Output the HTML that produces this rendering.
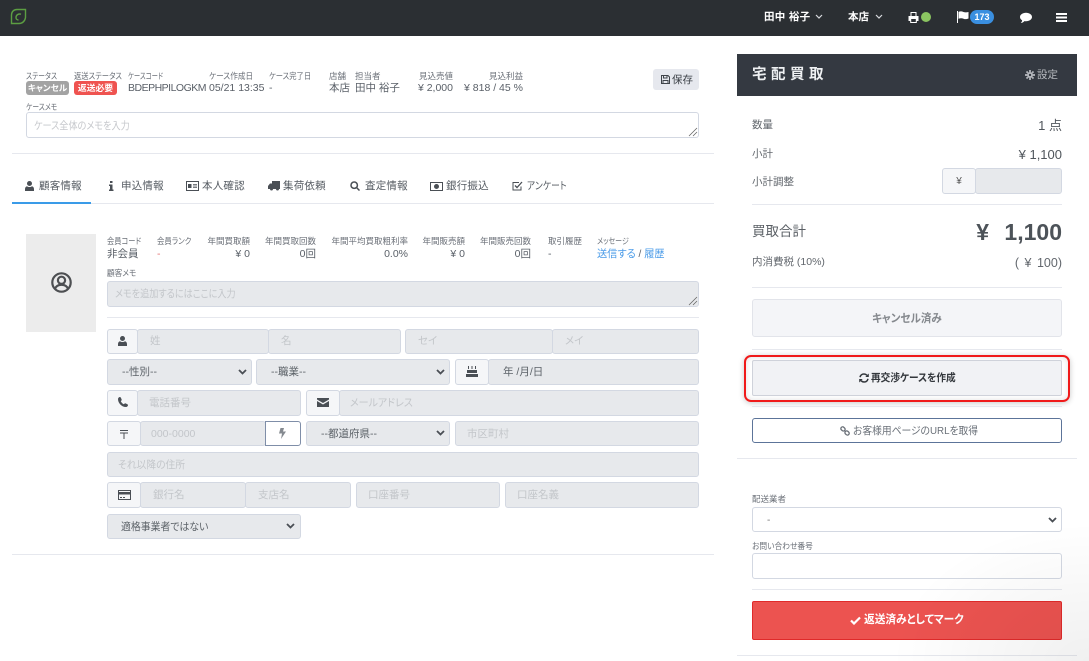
<!DOCTYPE html>
<html lang="ja"><head><meta charset="utf-8"><title>宅配買取</title>
<style>
html,body{margin:0;padding:0;background:#fff}
body{position:relative;width:1089px;height:661px;overflow:hidden;font-family:"Liberation Sans","Noto Sans CJK JP",sans-serif;color:#4a5057;font-feature-settings:"palt"}
div,svg{position:absolute;box-sizing:border-box}
.t{white-space:nowrap;height:16px;line-height:16px;font-size:11px;transform-origin:left center}
.r{text-align:right}
.l{font-size:8.5px;color:#6b7078}
.v{font-size:10.5px;color:#5a6068}
.i{background:#e7e9ec;border:1px solid #d3d8e2;border-radius:3px;font-size:10.5px;color:#c3c6ca;line-height:23px;white-space:nowrap}
.i span,.s span,.m span{display:inline-block;transform:scaleX(.87);transform-origin:left center}
.a{background:#f5f6f8;border:1px solid #d3d8e2;border-radius:3px}
.s{background:#e7e9ec;border:1px solid #d3d8e2;border-radius:3px;font-size:10.5px;color:#5c6268;line-height:24px;white-space:nowrap}
.h{height:1px;background:#e6e8ee}
.tab{font-size:10.5px;color:#555b62;letter-spacing:.2px}
</style></head><body>

<!-- navbar -->
<div style="left:0;top:0;width:1089px;height:36px;background:#2b2f33"></div>
<svg style="left:10px;top:8px" width="17" height="17" viewBox="0 0 17 17" fill="none" stroke="#5c9e42" stroke-width="1.4"><path d="M15.500 1.500H7C3.500 1.500 1.500 4 1.500 7v8.500H9c3.500 0 6-2.500 6.500-6z"/><path d="M11 6.200C8.500 5.500 6 7 6 9.500c0 1.500 1 2.500 2.500 2.500"/></svg>
<div class="t" style="left:764px;top:9px;font-size:10.5px;font-weight:bold;color:#fff;letter-spacing:.3px">田中 裕子</div>
<svg style="left:815px;top:14px" width="8" height="6" viewBox="0 0 8 6" fill="none" stroke="#d8dade" stroke-width="1.200"><path d="M1 1l3 3 3-3"/></svg>
<div class="t" style="left:848px;top:9px;font-size:10.5px;font-weight:bold;color:#fff">本店</div>
<svg style="left:875px;top:14px" width="8" height="6" viewBox="0 0 8 6" fill="none" stroke="#d8dade" stroke-width="1.200"><path d="M1 1l3 3 3-3"/></svg>
<svg style="left:908px;top:12px" width="11" height="11" viewBox="0 0 11 11"><path fill="#fff" fill-rule="evenodd" d="M2.500 0h6v4h2v5H8.800v2H2.200V9H.5V4h2zM3.500 1v3h4V1zM3.200 7v3h4.600V7z"/></svg>
<div style="left:921px;top:12px;width:10px;height:10px;border-radius:50%;background:#8bc561"></div>
<svg style="left:957px;top:11px" width="12" height="12" viewBox="0 0 12 12"><path fill="#fff" d="M0 0h1v12H0zM1.500 1c2-1 3.500-.5 5 0s3 .5 5 0v6.500c-2 .8-3.500.8-5 .2s-3-.7-5 0z"/></svg>
<div style="left:970px;top:10px;width:24px;height:14px;border-radius:7px;background:#3a8fe0;color:#fff;font-size:9px;font-weight:bold;text-align:center;line-height:15px">173</div>
<svg style="left:1020px;top:12px" width="12" height="12" viewBox="0 0 12 12"><path fill="#fff" d="M6 .8c3.300 0 6 1.800 6 4.200S9.300 9.200 6 9.200c-.6 0-1.100 0-1.600-.1C3.500 10.200 2 11 .8 11c.8-.8 1.300-1.700 1.300-2.800C.8 7.500 0 6.300 0 5 0 2.600 2.700.8 6 .8z"/></svg>
<svg style="left:1056px;top:13px" width="11" height="9" viewBox="0 0 11 9"><path fill="#fff" d="M0 0h11v2H0zM0 3.500h11v2H0zM0 7h11v2H0z"/></svg>

<!-- case header -->
<div class="t l" style="left:26px;top:68px;transform:scaleX(.8)">ステータス</div>
<div class="t l" style="left:74px;top:68px;transform:scaleX(.86)">返送ステータス</div>
<div class="t l" style="left:128px;top:68px;transform:scaleX(.75)">ケースコード</div>
<div class="t l" style="left:209px;top:68px;transform:scaleX(.9)">ケース作成日</div>
<div class="t l" style="left:269px;top:68px;transform:scaleX(.86)">ケース完了日</div>
<div class="t l" style="left:329px;top:68px">店舗</div>
<div class="t l" style="left:355px;top:68px">担当者</div>
<div class="t l r" style="left:393px;width:60px;top:68px">見込売値</div>
<div class="t l r" style="left:463px;width:60px;top:68px">見込利益</div>
<div style="left:26px;top:81px;width:43px;height:14px;border-radius:3px;background:#a3a3a3;color:#fff;font-size:8.5px;font-weight:bold;text-align:center;line-height:14px">キャンセル</div>
<div style="left:74px;top:81px;width:43px;height:14px;border-radius:3px;background:#ef5350;color:#fff;font-size:8.8px;font-weight:bold;text-align:center;line-height:14px">返送必要</div>
<div class="t v" style="left:128px;top:80px;letter-spacing:-.5px">BDEPHPILOGKM</div>
<div class="t v" style="left:209px;top:80px">05/21 13:35</div>
<div class="t v" style="left:269px;top:80px">-</div>
<div class="t v" style="left:329px;top:80px">本店</div>
<div class="t v" style="left:355px;top:80px">田中 裕子</div>
<div class="t v r" style="left:393px;width:60px;top:80px">¥ 2,000</div>
<div class="t v r" style="left:443px;width:80px;top:80px">¥ 818 / 45 %</div>
<div style="left:653px;top:69px;width:46px;height:21px;border-radius:3px;background:#e6e8ee"></div>
<svg style="left:661px;top:75px" width="9" height="9" viewBox="0 0 9 9" fill="none" stroke="#3f444a"><path d="M.5.5h6.500l1.500 1.500v6.500H.5zM2.500.5v2.500h3.500V.5M2 8.500V5.500h5v3"/></svg>
<div class="t" style="left:672px;top:72px;font-size:10.5px;color:#3a3f45">保存</div>
<div class="t l" style="left:26px;top:99px;transform:scaleX(.8)">ケースメモ</div>
<div class="m" style="left:26px;top:112px;width:673px;height:26px;border:1px solid #d3d8e2;border-radius:3px;background:#fff;color:#c6c8cc;font-size:10.5px;line-height:26px;padding-left:7px"><span>ケース全体のメモを入力</span></div>
<svg style="left:688px;top:127px" width="10" height="10" viewBox="0 0 10 10" stroke="#666" stroke-width=".8"><path d="M1 9l8-8M5 9l4-4"/></svg>
<div class="h" style="left:12px;top:153px;width:702px"></div>

<!-- tabs -->
<div class="h" style="left:12px;top:203px;width:702px;height:1px"></div>
<div style="left:12px;top:202px;width:79px;height:2px;background:#3a9be8"></div>
<svg style="left:25px;top:181px" width="9" height="10" viewBox="0 0 9 10"><path fill="#4a4f55" d="M4.500 0a2.500 2.500 0 1 1 0 5 2.500 2.500 0 0 1 0-5zM2 5.200c1.500 1 3.500 1 5 0 1.300.2 2 1.300 2 3V10H0V8.200c0-1.700.7-2.800 2-3z"/></svg>
<div class="t tab" style="left:39px;top:178px">顧客情報</div>
<svg style="left:108px;top:181px" width="6" height="10" viewBox="0 0 6 10"><path fill="#4a4f55" d="M2 0h2.500v2H2zM1 3.500h3.500V8.500H5.500V10H1V8.500h1V5H1z"/></svg>
<div class="t tab" style="left:121px;top:178px">申込情報</div>
<svg style="left:186px;top:181px" width="13" height="10" viewBox="0 0 13 10" fill="none" stroke="#4a4f55"><rect x=".5" y=".5" width="12" height="9"/><path fill="#4a4f55" stroke="none" d="M2 3h3.500v4H2z"/><path stroke-width=".8" d="M7 3.500h4M7 5h4M7 6.500h4"/></svg>
<div class="t tab" style="left:202px;top:178px">本人確認</div>
<svg style="left:268px;top:181px" width="12" height="10" viewBox="0 0 12 10"><path fill="#4a4f55" d="M4 0h8v8h-1a1.500 1.500 0 0 1-3 0H5a1.500 1.500 0 0 1-3 0H0V5l2-2.500h2z"/></svg>
<div class="t tab" style="left:283px;top:178px">集荷依頼</div>
<svg style="left:350px;top:181px" width="10" height="10" viewBox="0 0 10 10" fill="none" stroke="#4a4f55" stroke-width="1.500"><circle cx="4.200" cy="4.200" r="3.200"/><path d="M6.500 6.500L9.500 9.500"/></svg>
<div class="t tab" style="left:365px;top:178px">査定情報</div>
<svg style="left:430px;top:182px" width="13" height="9" viewBox="0 0 13 9" fill="none" stroke="#4a4f55"><rect x=".5" y=".5" width="12" height="8"/><circle cx="6.500" cy="4.500" r="2" fill="#4a4f55"/></svg>
<div class="t tab" style="left:446px;top:178px">銀行振込</div>
<svg style="left:512px;top:181px" width="11" height="10" viewBox="0 0 11 10" fill="none" stroke="#4a4f55"><path d="M9 5.500V9H1V1.500h6"/><path stroke-width="1.300" d="M3 4.500l2 2L10 1"/></svg>
<div class="t tab" style="left:527px;top:178px;transform:scaleX(.83)">アンケート</div>

<!-- customer -->
<div style="left:26px;top:234px;width:70px;height:98px;background:#ececec"></div>
<svg style="left:51px;top:272px" width="21" height="21" viewBox="0 0 21 21" fill="none"><circle cx="10.500" cy="10.500" r="9.200" stroke="#4d4f52" stroke-width="2.200"/><circle cx="10.500" cy="8.300" r="3.600" stroke="#4d4f52" stroke-width="2.200"/><path d="M4 17c1-3.300 3.500-4.200 6.500-4.200s5.500.9 6.500 4.200" stroke="#4d4f52" stroke-width="2.200"/></svg>

<div class="t l" style="left:107px;top:233px;transform:scaleX(.85)">会員コード</div>
<div class="t l" style="left:157px;top:233px;transform:scaleX(.87)">会員ランク</div>
<div class="t l r" style="left:190px;width:60px;top:233px">年間買取額</div>
<div class="t l r" style="left:256px;width:60px;top:233px">年間買取回数</div>
<div class="t l r" style="left:318px;width:90px;top:233px">年間平均買取粗利率</div>
<div class="t l r" style="left:405px;width:60px;top:233px">年間販売額</div>
<div class="t l r" style="left:471px;width:60px;top:233px">年間販売回数</div>
<div class="t l" style="left:548px;top:233px">取引履歴</div>
<div class="t l" style="left:597px;top:233px;transform:scaleX(.82)">メッセージ</div>
<div class="t v" style="left:107px;top:246px">非会員</div>
<div class="t v" style="left:157px;top:246px;color:#e57373">-</div>
<div class="t v r" style="left:190px;width:60px;top:246px">¥ 0</div>
<div class="t v r" style="left:256px;width:60px;top:246px">0回</div>
<div class="t v r" style="left:318px;width:90px;top:246px">0.0%</div>
<div class="t v r" style="left:405px;width:60px;top:246px">¥ 0</div>
<div class="t v r" style="left:471px;width:60px;top:246px">0回</div>
<div class="t v" style="left:548px;top:246px">-</div>
<div class="t v" style="left:597px;top:246px;color:#4a9be8;transform:scaleX(.97)">送信する <span style="color:#5a6068">/</span> 履歴</div>
<div class="t l" style="left:107px;top:265px;transform:scaleX(.9)">顧客メモ</div>
<div class="i" style="left:107px;top:281px;width:592px;height:26px;padding-left:7px;line-height:25px"><span>メモを追加するにはここに入力</span></div>
<svg style="left:688px;top:296px" width="10" height="10" viewBox="0 0 10 10" stroke="#666" stroke-width=".8"><path d="M1 9l8-8M5 9l4-4"/></svg>
<div class="h" style="left:107px;top:317px;width:592px"></div>

<!-- row 1 -->
<div class="a" style="left:107px;top:329px;width:31px;height:25px"></div>
<svg style="left:118px;top:336px" width="9" height="10" viewBox="0 0 9 10"><path fill="#4a4f55" d="M4.500 0a2.500 2.500 0 1 1 0 5 2.500 2.500 0 0 1 0-5zM2 5.200c1.500 1 3.500 1 5 0 1.300.2 2 1.300 2 3V10H0V8.200c0-1.700.7-2.800 2-3z"/></svg>
<div class="i" style="left:137px;top:329px;width:132px;height:25px;padding-left:12px">姓</div>
<div class="i" style="left:268px;top:329px;width:133px;height:25px;padding-left:12px">名</div>
<div class="i" style="left:405px;top:329px;width:148px;height:25px;padding-left:12px">セイ</div>
<div class="i" style="left:552px;top:329px;width:147px;height:25px;padding-left:12px">メイ</div>

<!-- row 2 -->
<div class="s" style="left:107px;top:359px;width:145px;height:26px;padding-left:14px">--性別--</div>
<svg style="left:238px;top:369px" width="9" height="6" viewBox="0 0 9 6" fill="none" stroke="#4a4f55" stroke-width="1.800"><path d="M1 1l3.500 3.500L8 1"/></svg>
<div class="s" style="left:256px;top:359px;width:194px;height:26px;padding-left:14px">--職業--</div>
<svg style="left:436px;top:369px" width="9" height="6" viewBox="0 0 9 6" fill="none" stroke="#4a4f55" stroke-width="1.800"><path d="M1 1l3.500 3.500L8 1"/></svg>
<div class="a" style="left:455px;top:359px;width:34px;height:26px"></div>
<svg style="left:466px;top:366px" width="12" height="11" viewBox="0 0 12 11"><path fill="#4a4f55" d="M2 0h1v3H2zM5.500 0h1v3h-1zM9 0h1v3H9zM1 4h10v3H1zM0 8h12v3H0z"/></svg>
<div class="s" style="left:488px;top:359px;width:211px;height:26px;padding-left:14px">年 /月/日</div>

<!-- row 3 -->
<div class="a" style="left:107px;top:390px;width:31px;height:26px"></div>
<svg style="left:118px;top:397px" width="10" height="10" viewBox="0 0 10 10"><path fill="#4a4f55" d="M2 0c.8 0 1.500 2 1.800 3L2.800 4.200c.6 1.300 1.700 2.400 3 3L7 6.200c1 .3 3 1 3 1.800 0 1-1 2-2 2C3.500 10 0 6 0 2c0-1 1-2 2-2z"/></svg>
<div class="i" style="left:137px;top:390px;width:164px;height:26px;padding-left:11px;line-height:25px">電話番号</div>
<div class="a" style="left:306px;top:390px;width:34px;height:26px"></div>
<svg style="left:317px;top:398px" width="12" height="9" viewBox="0 0 12 9"><path fill="#4a4f55" d="M0 0h12v1.500L6 5 0 1.500zM0 3l6 3.500L12 3v6H0z"/></svg>
<div class="i" style="left:339px;top:390px;width:360px;height:26px;padding-left:10px;line-height:25px"><span style="transform:scaleX(.95)">メールアドレス</span></div>

<!-- row 4 -->
<div class="a" style="left:107px;top:421px;width:34px;height:25px"></div>
<svg style="left:119px;top:429px" width="10" height="10" viewBox="0 0 10 10" stroke="#4a4f55" fill="none"><path d="M1 1.500h8M1 4h8M5 4v6"/></svg>
<div class="i" style="left:140px;top:421px;width:126px;height:25px;padding-left:10px;line-height:24px">000-0000</div>
<div style="left:265px;top:421px;width:36px;height:25px;background:#fff;border:1px solid #7f8ea8;border-radius:0 3px 3px 0"></div>
<svg style="left:279px;top:428px" width="7" height="11" viewBox="0 0 7 11"><path fill="#858a90" d="M1.500 0H5L4 3.500h3L2 11l1-5.500H0z"/></svg>
<div class="s" style="left:306px;top:421px;width:144px;height:25px;padding-left:14px;line-height:24px">--都道府県--</div>
<svg style="left:436px;top:430px" width="9" height="6" viewBox="0 0 9 6" fill="none" stroke="#4a4f55" stroke-width="1.800"><path d="M1 1l3.500 3.500L8 1"/></svg>
<div class="i" style="left:455px;top:421px;width:244px;height:25px;padding-left:11px;line-height:24px">市区町村</div>

<!-- row 5 -->
<div class="i" style="left:107px;top:452px;width:592px;height:25px;padding-left:10px;line-height:25px"><span style="transform:scaleX(.93)">それ以降の住所</span></div>

<!-- row 6 -->
<div class="a" style="left:107px;top:482px;width:34px;height:26px"></div>
<svg style="left:118px;top:490px" width="13" height="10" viewBox="0 0 13 10"><rect x=".5" y=".5" width="12" height="9" fill="none" stroke="#4a4f55"/><path fill="#4a4f55" d="M0 2h13v2.500H0zM2 7h2v1H2zM5 7h2v1H5z"/></svg>
<div class="i" style="left:140px;top:482px;width:106px;height:26px;padding-left:12px;line-height:25px">銀行名</div>
<div class="i" style="left:245px;top:482px;width:106px;height:26px;padding-left:12px;line-height:25px">支店名</div>
<div class="i" style="left:356px;top:482px;width:144px;height:26px;padding-left:11px;line-height:25px">口座番号</div>
<div class="i" style="left:505px;top:482px;width:194px;height:26px;padding-left:11px;line-height:25px">口座名義</div>

<!-- row 7 -->
<div class="s" style="left:107px;top:514px;width:194px;height:25px;padding-left:13px;line-height:25px"><span style="transform:scaleX(.94)">適格事業者ではない</span></div>
<svg style="left:286px;top:523px" width="9" height="6" viewBox="0 0 9 6" fill="none" stroke="#4a4f55" stroke-width="1.800"><path d="M1 1l3.500 3.500L8 1"/></svg>
<div class="h" style="left:12px;top:554px;width:702px"></div>

<!-- right panel -->
<div style="left:737px;top:54px;width:340px;height:42px;background:#343941"></div>
<div class="t" style="left:752px;top:67px;font-size:14.5px;font-weight:bold;color:#eef0f2;letter-spacing:4.500px">宅配買取</div>
<svg style="left:1025px;top:70px" width="10" height="10" viewBox="0 0 10 10"><circle cx="5" cy="5" r="3" fill="#b8bbc0"/><circle cx="5" cy="5" r="1.200" fill="#343941"/><path stroke="#b8bbc0" stroke-width="1.700" d="M5 0v2M5 8v2M0 5h2M8 5h2M1.500 1.500l1.300 1.300M7.200 7.200l1.300 1.300M1.500 8.500l1.300-1.300M7.200 2.800l1.300-1.300"/></svg>
<div class="t" style="left:1037px;top:67px;font-size:10.5px;color:#b8bbc0">設定</div>

<div class="t" style="left:752px;top:117px;font-size:10.5px;color:#62676d">数量</div>
<div class="t r" style="left:962px;width:100px;top:118px;font-size:13px;color:#50565c">1 点</div>
<div class="t" style="left:752px;top:146px;font-size:10.5px;color:#62676d">小計</div>
<div class="t r" style="left:962px;width:100px;top:147px;font-size:13px;color:#50565c">¥ 1,100</div>
<div class="t" style="left:752px;top:174px;font-size:10.5px;color:#62676d">小計調整</div>
<div class="a" style="left:942px;top:168px;width:34px;height:26px;text-align:center;font-size:10px;line-height:26px;color:#555">¥</div>
<div class="i" style="left:975px;top:168px;width:87px;height:26px"></div>
<div class="h" style="left:752px;top:204px;width:310px"></div>

<div class="t" style="left:752px;top:224px;font-size:13.5px;color:#5a5f65">買取合計</div>
<div class="t r" style="left:932px;width:130px;top:217px;height:30px;line-height:30px;font-size:23px;font-weight:bold;word-spacing:9px;color:#4d5359">¥ 1,100</div>
<div class="t" style="left:752px;top:254px;font-size:10.5px;color:#62676d">内消費税 (10%)</div>
<div class="t r" style="left:962px;width:100px;top:255px;font-size:12.5px;word-spacing:2px;color:#62676d">( ¥ 100)</div>
<div class="h" style="left:752px;top:287px;width:310px"></div>

<div style="left:752px;top:299px;width:310px;height:38px;background:#f4f5f8;border:1px solid #e2e4ea;border-radius:3px"></div>
<div class="t" style="left:872px;top:311px;font-size:11.5px;font-weight:bold;color:#85898e;transform:scaleX(.92)">キャンセル済み</div>
<div class="h" style="left:752px;top:349px;width:310px"></div>

<div style="left:744px;top:355px;width:326px;height:47px;border:2px solid #f01a1a;border-radius:7px;box-shadow:0 1px 6px rgba(0,0,0,.22),inset 0 0 6px rgba(0,0,0,.12)"></div>
<div style="left:752px;top:360px;width:310px;height:36px;background:#f1f2f5;border:1px solid #cfd2da;border-radius:2px"></div>
<div class="t" style="left:871px;top:370px;font-size:10.5px;font-weight:bold;color:#33373c;transform:scaleX(.92)">再交渉ケースを作成</div>
<svg style="left:859px;top:373px" width="10" height="10" viewBox="0 0 10 10" fill="none" stroke="#33373c" stroke-width="1.500"><path d="M1 4.200C1.500 2.300 3 1 5 1c1.200 0 2.200.5 3 1.300M9 5.800C8.500 7.700 7 9 5 9c-1.200 0-2.200-.5-3-1.300"/><path fill="#33373c" stroke="none" d="M9.800.5v3.500H6.300zM.2 9.500V6h3.500z"/></svg>
<div class="h" style="left:752px;top:406px;width:310px"></div>

<div style="left:752px;top:418px;width:310px;height:25px;background:#fff;border:1px solid #5c7499;border-radius:3px"></div>
<div class="t" style="left:853px;top:423px;font-size:10.5px;color:#6a7078;transform:scaleX(.93)">お客様用ページのURLを取得</div>
<svg style="left:840px;top:426px" width="10" height="10" viewBox="0 0 10 10" fill="none" stroke="#6a7078" stroke-width="1.300"><rect x=".7" y="1.200" width="4.500" height="3.500" rx="1.700" transform="rotate(40 3 3)"/><rect x="4.800" y="5.200" width="4.500" height="3.500" rx="1.700" transform="rotate(40 7 7)"/></svg>
<div class="h" style="left:737px;top:458px;width:340px"></div>

<div class="t l" style="left:752px;top:491px">配送業者</div>
<div style="left:752px;top:507px;width:310px;height:25px;background:#fff;border:1px solid #d3d8e2;border-radius:3px;font-size:10px;line-height:25px;color:#777;padding-left:14px">-</div>
<svg style="left:1048px;top:517px" width="9" height="6" viewBox="0 0 9 6" fill="none" stroke="#4a4f55" stroke-width="1.800"><path d="M1 1l3.500 3.500L8 1"/></svg>
<div class="t l" style="left:752px;top:538px;transform:scaleX(.91)">お問い合わせ番号</div>
<div style="left:752px;top:553px;width:310px;height:26px;background:#fff;border:1px solid #d3d8e2;border-radius:3px"></div>
<div class="h" style="left:752px;top:589px;width:310px"></div>
<div style="left:752px;top:601px;width:310px;height:39px;background:#ec5350;border:1px solid #e02a2a;border-radius:2px"></div>
<div class="t" style="left:864px;top:612px;font-size:11.5px;font-weight:bold;color:#fff;transform:scaleX(.93)">返送済みとしてマーク</div>
<svg style="left:850px;top:616px" width="11" height="9" viewBox="0 0 11 9" fill="none" stroke="#fff" stroke-width="2.200"><path d="M1 4.500l3 3 6-6"/></svg>
<div class="h" style="left:737px;top:655px;width:340px"></div>

<div style="left:889px;top:521px;width:200px;height:140px;background:radial-gradient(ellipse at 100% 100%,rgba(0,0,0,.06),rgba(0,0,0,0) 70%)"></div>

</body></html>
